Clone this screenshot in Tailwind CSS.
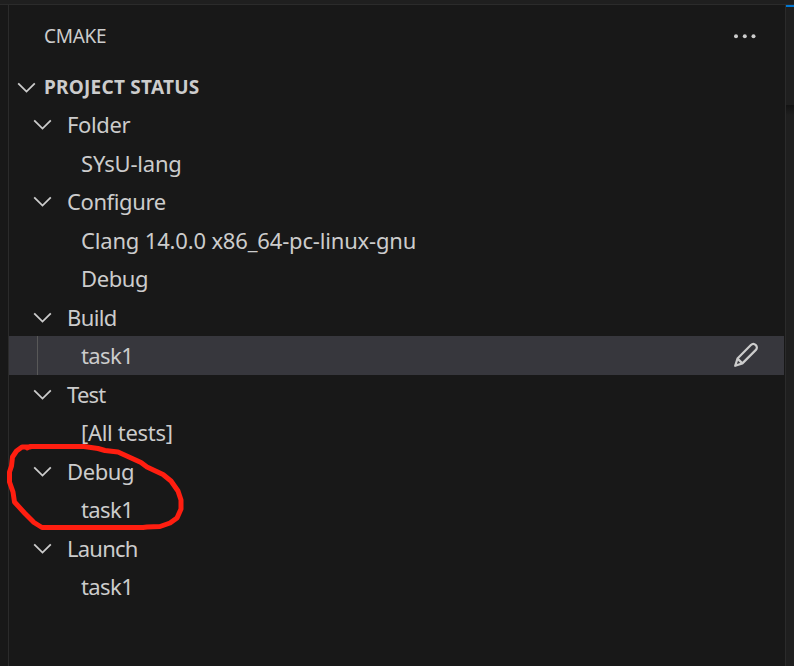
<!DOCTYPE html>
<html lang="en"><head><meta charset="utf-8"><title>CMake</title>
<script src="https://cdn.jsdelivr.net/npm/@tailwindcss/browser@4"></script></head>
<body class="h-[666px] w-[794px] overflow-hidden bg-[#181818] font-['Noto_Sans','Open_Sans',sans-serif] text-[22px] leading-[38.5px] text-[#cccccc]">
<svg class="hidden"><symbol id="chevron" viewBox="0 0 19 20"><path d="M1.2 6.3 9.5 14.600 17.8 6.3" fill="none" stroke="#cccccc" stroke-width="1.8"/></symbol></svg>
<div class="flex h-full flex-col">
  <div class="h-[5px] shrink-0 border-b border-[#2b2b2b] bg-[#1f1f1f]"></div>
  <div class="flex min-h-0 flex-1">
    <div class="w-[9px] border-r border-[#2b2b2b]"></div>
    <main class="relative flex w-[775px] flex-col whitespace-nowrap">
      <header class="flex h-[63px] items-center justify-between pr-[27px] pl-[35px] text-[19px]">
        <span class="tracking-[-0.3px]">CMAKE</span>
        <svg class="h-6 w-6" viewBox="0 0 24 24" fill="#cccccc"><circle cx="3" cy="11.2" r="2"/><circle cx="11.8" cy="11.2" r="2"/><circle cx="20.5" cy="11.2" r="2"/></svg>
      </header>
      <div class="flex h-[37px] items-center pt-px pl-[8px] text-[19px] font-bold"><svg class="mr-[8px] h-5 w-[19px] shrink-0"><use href="#chevron"/></svg><span class="tracking-[0.25px]">PROJECT STATUS</span></div>
      <ul>
        <li class="flex h-[38.5px] items-center pl-[24px]"><svg class="mr-[15px] h-5 w-[19px]"><use href="#chevron"/></svg><span class="tracking-[-0.35px]">Folder</span></li>
        <li class="flex h-[38.5px] items-center pl-[72px]"><span class="tracking-[-0.2px]">SYsU-lang</span></li>
        <li class="flex h-[38.5px] items-center pl-[24px]"><svg class="mr-[15px] h-5 w-[19px]"><use href="#chevron"/></svg><span class="tracking-[-0.4px]">Configure</span></li>
        <li class="flex h-[38.5px] items-center pl-[72px]"><span class="tracking-[-0.17px]">Clang 14.0.0 x86_64-pc-linux-gnu</span></li>
        <li class="flex h-[38.5px] items-center pl-[72px]"><span class="tracking-[-0.4px]">Debug</span></li>
        <li class="flex h-[38.5px] items-center pl-[24px]"><svg class="mr-[15px] h-5 w-[19px]"><use href="#chevron"/></svg><span class="tracking-[-0.6px]">Build</span></li>
        <li class="flex h-[38.5px] items-center bg-[#37373d] pr-[24px] pl-[28px]"><i class="mr-[43px] h-full w-px bg-[#585858]"></i><span class="tracking-[-0.6px]">task1</span>
          <svg class="ml-auto h-7 w-7" viewBox="0 0 28 28" fill="none" stroke="#cccccc" stroke-width="2.2" stroke-linejoin="round"><path d="M3.2 24.8 5.5 17.6 18.9 4.1C20.2 2.8 22.3 2.7 23.800 4.1 25.2 5.5 25.2 7.600 23.900 8.900L10.4 22.4ZM5.5 17.6 10.4 22.4"/></svg>
        </li>
        <li class="flex h-[38.5px] items-center pl-[24px]"><svg class="mr-[15px] h-5 w-[19px]"><use href="#chevron"/></svg><span class="tracking-[-0.8px]">Test</span></li>
        <li class="flex h-[38.5px] items-center pl-[72px]"><span class="tracking-[-0.3px]">[All tests]</span></li>
        <li class="flex h-[38.5px] items-center pl-[24px]"><svg class="mr-[15px] h-5 w-[19px]"><use href="#chevron"/></svg><span class="tracking-[-0.4px]">Debug</span></li>
        <li class="flex h-[38.5px] items-center pl-[72px]"><span class="tracking-[-0.6px]">task1</span></li>
        <li class="flex h-[38.5px] items-center pl-[24px]"><svg class="mr-[15px] h-5 w-[19px]"><use href="#chevron"/></svg><span class="tracking-[-0.75px]">Launch</span></li>
        <li class="flex h-[38.5px] items-center pl-[72px]"><span class="tracking-[-0.6px]">task1</span></li>
      </ul>
    </main>
    <div class="w-[2px] border-r border-[#2b2b2b]"></div>
    <div class="flex flex-1 flex-col border-t-2 border-[#0078d4] bg-[#1f1f1f]"><div class="mt-[98px] h-[10px] bg-linear-to-b from-[#131313] to-[#1f1f1f]"></div></div>
  </div>
</div>
<svg class="pointer-events-none absolute top-[435px] left-0 h-[100px] w-[200px]" viewBox="0 0 200 100" fill="none" stroke="#ff1e10" stroke-width="5" stroke-linecap="round" stroke-linejoin="round"><path d="M27 13 30 11.5H84L98 13.5 105 15.500 118 17 141 27.500 147 32 163 39.500 171 46 178 56 181 65V74L177 83 170 88 160 91.5 147 92 143 92.500H42L34 87.500 25 78.500 14.500 67 13 57 9.500 47V37L11.500 31 12.500 22 16.500 16 22 12H30"/></svg>
</body></html>
